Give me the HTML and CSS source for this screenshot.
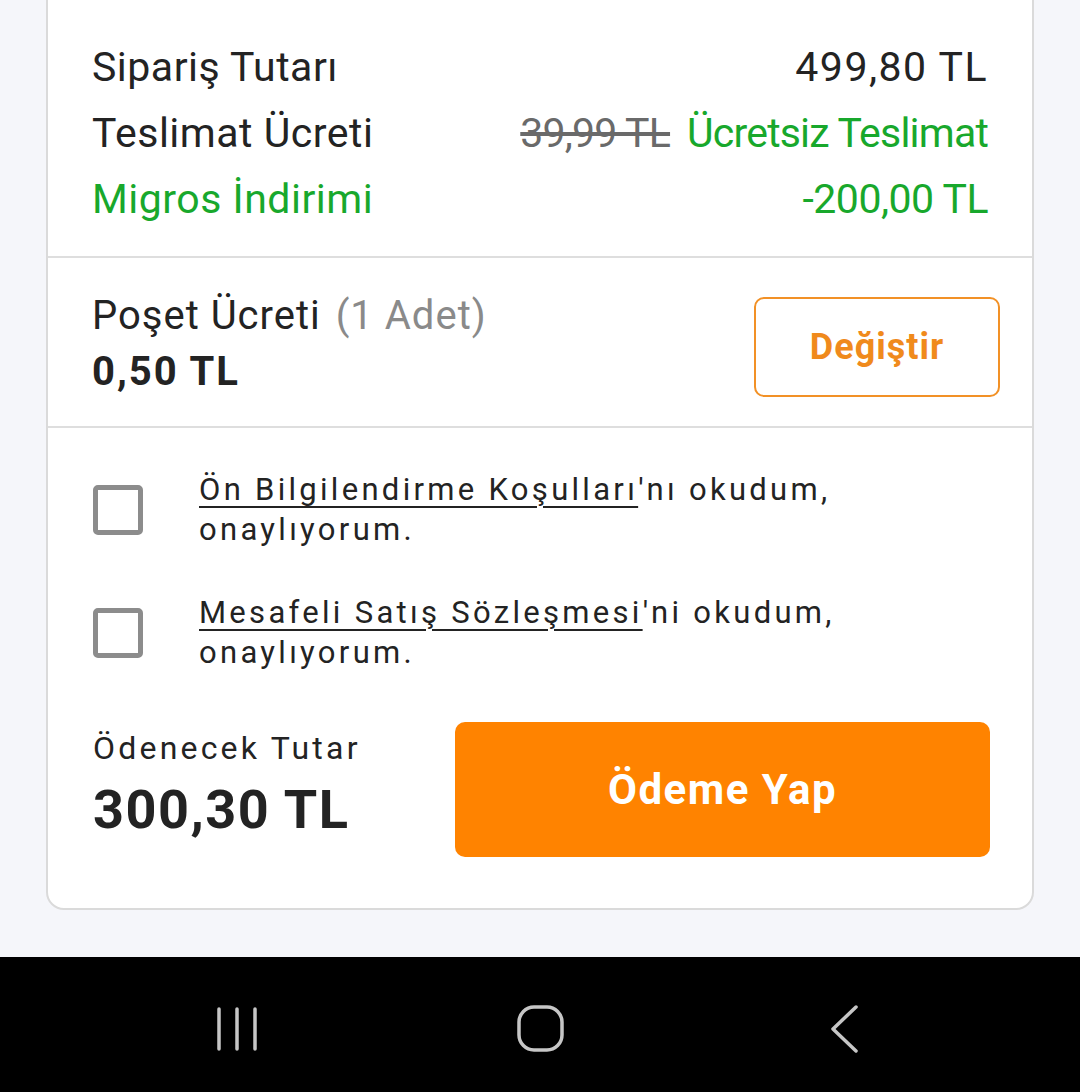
FILE: index.html
```html
<!DOCTYPE html>
<html lang="tr">
<head>
  <meta charset="UTF-8">
  <meta name="viewport" content="width=device-width, initial-scale=1.0">
  <title>Sepet Özeti</title>
  <link rel="stylesheet" href="styles.css">
</head>
<body>

  <div class="page">
    <div class="card">

      <div class="summary">
        <div class="row">
          <span>Sipariş Tutarı</span>
          <span class="amount">499,80 TL</span>
        </div>
        <div class="row">
          <span>Teslimat Ücreti</span>
          <span class="delivery"><s class="old-price">39,99 TL</s><span class="green">Ücretsiz Teslimat</span></span>
        </div>
        <div class="row green">
          <span>Migros İndirimi</span>
          <span class="discount">-200,00 TL</span>
        </div>
      </div>

      <div class="bag">
        <div class="bag-info">
          <div class="bag-title">Poşet Ücreti <span class="muted">(1 Adet)</span></div>
          <div class="bag-price">0,50 TL</div>
        </div>
        <button class="btn-outline">Değiştir</button>
      </div>

      <div class="agreements">
        <label class="check-item">
          <span class="checkbox"></span>
          <span class="check-text"><u>Ön Bilgilendirme Koşulları</u>'nı okudum, onaylıyorum.</span>
        </label>
        <label class="check-item">
          <span class="checkbox"></span>
          <span class="check-text"><u>Mesafeli Satış Sözleşmesi</u>'ni okudum, onaylıyorum.</span>
        </label>

        <div class="checkout">
          <div class="total">
            <div class="total-label">Ödenecek Tutar</div>
            <div class="total-price">300,30 TL</div>
          </div>
          <button class="btn-pay">Ödeme Yap</button>
        </div>
      </div>

    </div>
  </div>

  <div class="navbar">
    <svg class="nav-icon" width="44" height="48" viewBox="0 0 44 48">
      <path d="M4 4v40M22 4v40M40 4v40" stroke="#c6c6c6" stroke-width="3.5" stroke-linecap="round" fill="none"/>
    </svg>
    <svg class="nav-icon" width="50" height="50" viewBox="0 0 50 50">
      <rect x="4" y="3" width="43" height="43" rx="15" stroke="#c6c6c6" stroke-width="3.5" fill="none"/>
    </svg>
    <svg class="nav-icon" width="32" height="50" viewBox="0 0 32 50">
      <path d="M29 3L6 25l23 22" stroke="#c6c6c6" stroke-width="3.5" stroke-linecap="round" stroke-linejoin="round" fill="none"/>
    </svg>
  </div>

</body>
</html>
```

FILE: styles.css
```css
body, html {
  margin: 0;
  padding: 0;
  font-family: 'Roboto', 'Noto Sans', sans-serif;
  background-color: #f5f6fa;
  color: #232323;
}

body {
  height: 1092px;
  display: flex;
  flex-direction: column;
  overflow: hidden;
}

.page {
  flex: 1;
  padding: 0 46px;
}

.card {
  margin-top: -20px;
  background: #ffffff;
  border: 2px solid #dadada;
  border-radius: 18px;
}

.summary {
  padding: 52px 44px 24px;
}

.row {
  display: flex;
  justify-content: space-between;
  line-height: 66px;
  font-size: 41px;
  letter-spacing: 0.5px;
}

.amount {
  letter-spacing: 1.5px;
}

.delivery {
  letter-spacing: -0.8px;
}

.delivery .green {
  margin-left: 17px;
}

.discount {
  letter-spacing: -0.5px;
}

.green {
  color: #18a82c;
}

.old-price {
  color: #6a6a6a;
}

.bag {
  border-top: 2px solid #dedede;
  border-bottom: 2px solid #dedede;
  padding: 30px 32px 26px 44px;
  display: flex;
  justify-content: space-between;
  align-items: center;
}

.bag-title {
  font-size: 40px;
  line-height: 56px;
  letter-spacing: 1px;
}

.muted {
  color: #8a8a8a;
  margin-left: 4px;
}

.bag-price {
  font-size: 40px;
  line-height: 56px;
  font-weight: 700;
  letter-spacing: 2px;
}

.btn-outline {
  width: 246px;
  height: 100px;
  margin-top: 6px;
  background: #ffffff;
  border: 2px solid #f29126;
  border-radius: 10px;
  color: #f08a1c;
  font-family: inherit;
  font-size: 36px;
  font-weight: 700;
  letter-spacing: 1px;
}

.agreements {
  padding: 42px 42px 51px 45px;
}

.check-item {
  display: flex;
  align-items: center;
  gap: 56px;
  margin-bottom: 43px;
}

.checkbox {
  flex: none;
  width: 40px;
  height: 40px;
  border: 5px solid #8c8c8c;
  border-radius: 5px;
}

.check-text {
  font-size: 31px;
  line-height: 40px;
  letter-spacing: 3.3px;
}

.check-text u {
  text-underline-offset: 6px;
  text-decoration-thickness: 2px;
}

.checkout {
  display: flex;
  justify-content: space-between;
  align-items: flex-start;
  margin-top: 49px;
}

.total-label {
  font-size: 32px;
  line-height: 52px;
  letter-spacing: 3.2px;
}

.total-price {
  font-size: 54px;
  line-height: 72px;
  font-weight: 700;
  letter-spacing: 1.5px;
}

.btn-pay {
  width: 535px;
  height: 135px;
  background: #ff8300;
  border: none;
  border-radius: 10px;
  color: #ffffff;
  font-family: inherit;
  font-size: 42px;
  font-weight: 700;
  letter-spacing: 1.5px;
}

.navbar {
  height: 135px;
  box-sizing: border-box;
  padding-top: 9px;
  flex: none;
  background: #000000;
  display: grid;
  grid-template-columns: repeat(3, 120px);
  column-gap: 183px;
  justify-content: center;
  align-items: center;
}

.nav-icon {
  justify-self: center;
}
```
